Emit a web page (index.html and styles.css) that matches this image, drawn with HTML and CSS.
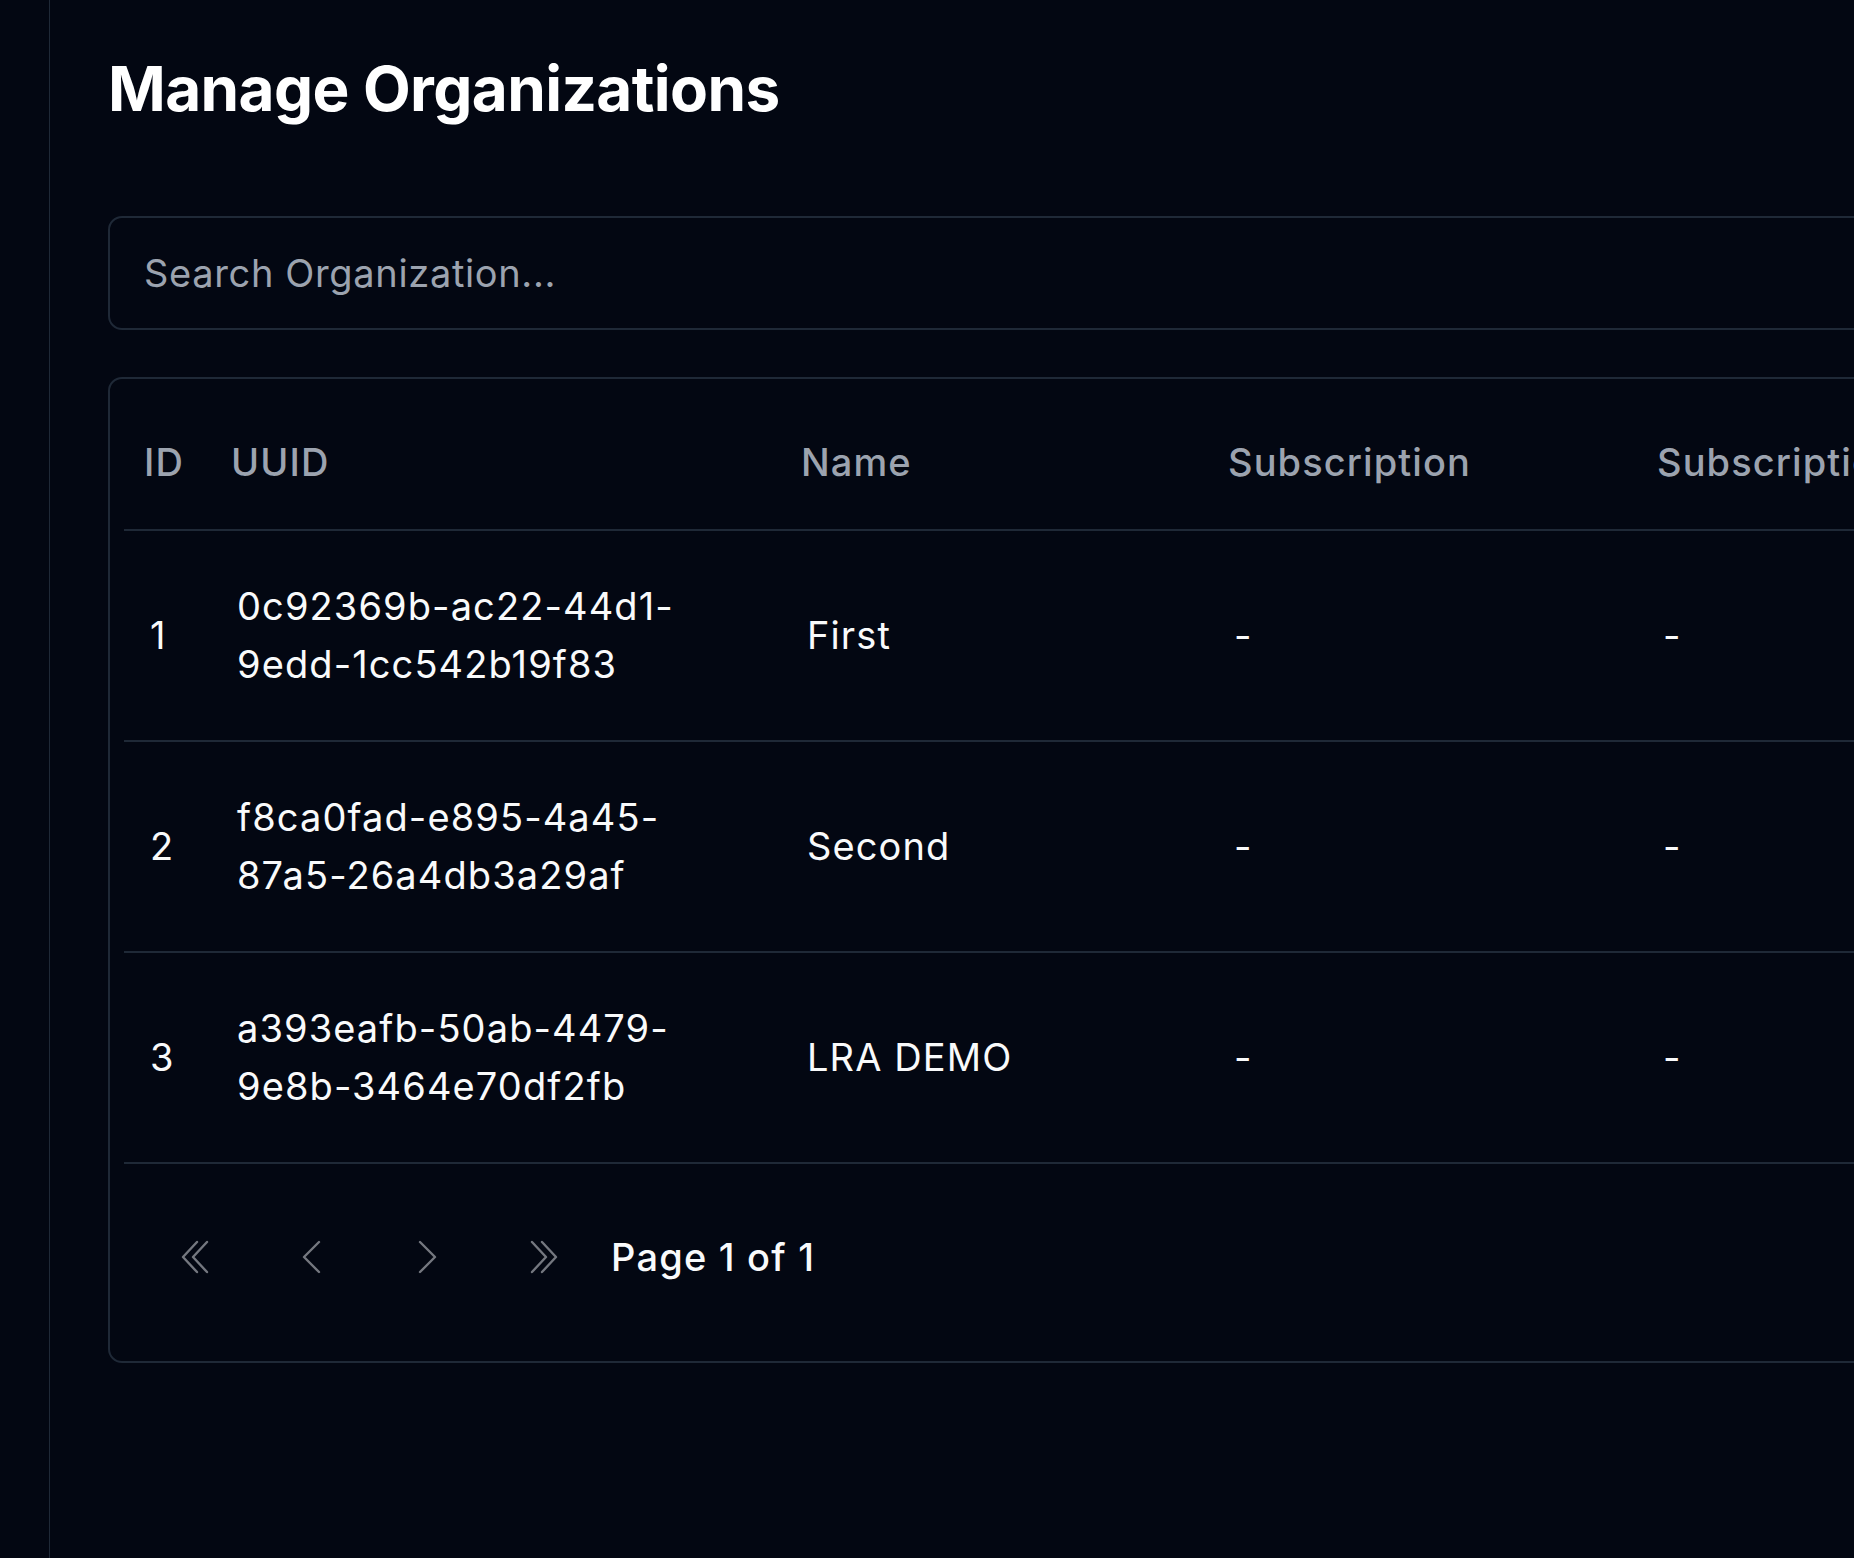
FILE: index.html
```html
<!DOCTYPE html>
<html lang="en">
<head>
<meta charset="utf-8">
<title>Manage Organizations</title>
<link rel="stylesheet" href="styles.css">
</head>
<body>
<div class="layout">
  <aside class="sidebar"></aside>
  <main class="main">
    <h1 class="title">Manage Organizations</h1>
    <div class="search">
      <input class="search-input" type="text" placeholder="Search Organization...">
    </div>
    <section class="card">
      <table class="table">
        <colgroup>
          <col class="col-id">
          <col class="col-uuid">
          <col class="col-name">
          <col class="col-sub">
          <col class="col-sub2">
          <col class="col-rest">
        </colgroup>
        <thead>
          <tr>
            <th>ID</th>
            <th>UUID</th>
            <th>Name</th>
            <th>Subscription</th>
            <th>Subscription Status</th>
            <th>Actions</th>
          </tr>
        </thead>
        <tbody>
          <tr>
            <td>1</td>
            <td><span class="uuid-line">0c92369b-ac22-44d1-</span><span class="uuid-line">9edd-1cc542b19f83</span></td>
            <td>First</td>
            <td>-</td>
            <td>-</td>
            <td></td>
          </tr>
          <tr>
            <td>2</td>
            <td><span class="uuid-line">f8ca0fad-e895-4a45-</span><span class="uuid-line">87a5-26a4db3a29af</span></td>
            <td>Second</td>
            <td>-</td>
            <td>-</td>
            <td></td>
          </tr>
          <tr>
            <td>3</td>
            <td><span class="uuid-line">a393eafb-50ab-4479-</span><span class="uuid-line">9e8b-3464e70df2fb</span></td>
            <td>LRA DEMO</td>
            <td>-</td>
            <td>-</td>
            <td></td>
          </tr>
        </tbody>
      </table>
      <nav class="pagination">
        <button class="page-btn" disabled aria-label="First page">
          <svg viewBox="0 0 32 34" width="32" height="34"><polyline points="16,2 2,17 16,32"/><polyline points="26,2 12,17 26,32"/></svg>
        </button>
        <button class="page-btn" disabled aria-label="Previous page">
          <svg viewBox="0 0 32 34" width="32" height="34"><polyline points="23,2 8,17 23,32"/></svg>
        </button>
        <button class="page-btn" disabled aria-label="Next page">
          <svg viewBox="0 0 32 34" width="32" height="34"><polyline points="9,2 24,17 9,32"/></svg>
        </button>
        <button class="page-btn" disabled aria-label="Last page">
          <svg viewBox="0 0 32 34" width="32" height="34"><polyline points="6,2 20,17 6,32"/><polyline points="16,2 30,17 16,32"/></svg>
        </button>
        <span class="page-info">Page 1 of 1</span>
      </nav>
    </section>
  </main>
</div>
</body>
</html>
```

FILE: styles.css
```css
html, body {
  margin: 0;
  padding: 0;
  background: #030712;
  overflow: hidden;
}

body {
  font-family: Inter, "Liberation Sans", sans-serif;
  color: #f9fafb;
  width: 1854px;
  height: 1558px;
}

.layout {
  display: flex;
  height: 1558px;
}

.sidebar {
  flex: 0 0 49px;
  border-right: 1px solid #1f2937;
}

.main {
  flex: 0 0 auto;
  width: 2400px;
  padding-left: 58px;
  padding-top: 58px;
}

.title {
  margin: 0;
  font-size: 62px;
  line-height: 62px;
  font-weight: 700;
  color: #ffffff;
  letter-spacing: -0.6px;
}

.search {
  margin-top: 96px;
}

.search-input {
  display: block;
  box-sizing: border-box;
  width: 100%;
  height: 114px;
  padding: 0 34px;
  background: transparent;
  border: 2px solid #1f2937;
  border-radius: 14px;
  font-family: Inter, "Liberation Sans", sans-serif;
  font-size: 38px;
  letter-spacing: 0.65px;
  color: #f9fafb;
  outline: none;
}

.search-input::placeholder {
  color: #9ca3af;
}

.card {
  margin-top: 47px;
  border: 2px solid #1f2937;
  border-radius: 14px;
  padding: 15px 14px 0;
}

.table {
  border-collapse: collapse;
  table-layout: fixed;
  width: 2200px;
  font-size: 38px;
  letter-spacing: 1.1px;
}

.col-id { width: 87px; }
.col-uuid { width: 570px; }
.col-name { width: 427px; }
.col-sub { width: 429px; }
.col-sub2 { width: 429px; }
.col-rest { width: 258px; }

.table th {
  height: 135px;
  padding: 0 0 0 20px;
  text-align: left;
  vertical-align: middle;
  font-weight: 500;
  color: #9ca3af;
  white-space: nowrap;
  overflow: hidden;
  border-bottom: 2px solid #1f2937;
}

.table td {
  padding: 46px 0 47px 26px;
  line-height: 58px;
  vertical-align: middle;
  color: #f9fafb;
  border-bottom: 2px solid #1f2937;
}

.uuid-line {
  display: block;
}

.pagination {
  display: flex;
  align-items: center;
  padding: 53px 0 64px 33px;
}

.page-btn {
  width: 80px;
  height: 80px;
  margin-right: 35px;
  padding: 0;
  background: transparent;
  border: none;
  display: flex;
  align-items: center;
  justify-content: center;
}

.page-btn:last-of-type {
  margin-right: 29px;
}

.page-btn svg {
  fill: none;
  stroke: #74777f;
  stroke-width: 2.4;
  stroke-linecap: round;
  stroke-linejoin: round;
}

.page-info {
  font-size: 38px;
  font-weight: 500;
  letter-spacing: 1.2px;
  color: #f9fafb;
}
```
